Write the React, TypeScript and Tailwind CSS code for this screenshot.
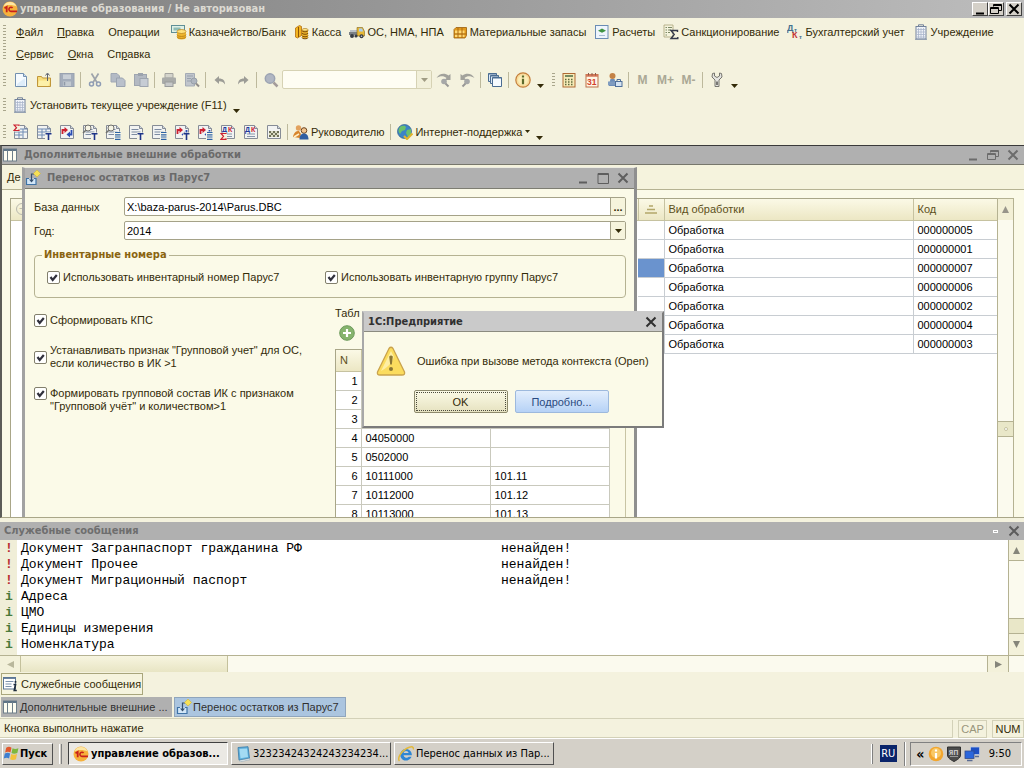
import React from 'react';
import clsx from 'clsx';

type IconProps = { children: React.ReactNode; size?: string };

const Icon = ({ children, size = 'size-4' }: IconProps) => (
  <svg viewBox="0 0 16 16" className={clsx('shrink-0', size)} aria-hidden="true">
    {children}
  </svg>
);

/* ---------- icons ---------- */

const LogoIcon = ({ size = 'size-4' }: { size?: string }) => (
  <Icon size={size}>
    <circle cx="8" cy="8" r="7.5" fill="#f6b13c" />
    <path d="M1.5 5.5a7 7 0 0 1 13 0c-4-2-9-2-13 0z" fill="#fde6a4" />
    <path d="M2.5 7.2l2.2-1.4v5.4" fill="none" stroke="#c8201c" strokeWidth="1.8" />
    <path d="M10.6 6.9A2.1 2.1 0 1 0 9 10.4h6" fill="none" stroke="#c8201c" strokeWidth="1.6" />
  </Icon>
);

const BankIcon = () => (
  <Icon>
    <rect x="0.5" y="1.5" width="13" height="7" fill="#dff0e6" stroke="#5f8f96" />
    <path d="M2.5 5h7" stroke="#8fbcb4" strokeWidth="3" />
    <path d="M6 8h9v5.500a4.500 2 0 0 1-9 0z" fill="#eeb52c" />
    <ellipse cx="10.5" cy="7.500" rx="4.500" ry="2" fill="#ffe27a" stroke="#b57b14" strokeWidth=".7" />
    <path d="M6 10.500a4.500 2 0 0 0 9 0M6 12.500a4.500 2 0 0 0 9 0" fill="none" stroke="#b57b14" strokeWidth=".8" />
  </Icon>
);

const CashIcon = () => (
  <Icon>
    <path d="M1.500 4l4-2.500 2 1v9l-4 2.500-2-1z" fill="#f3b521" stroke="#b26f10" strokeWidth=".8" />
    <path d="M4.500 3v10" stroke="#8d5508" />
    <path d="M8 6h6v7a3 1.500 0 0 1-6 0z" fill="#edb42c" />
    <path d="M8 6.500a3 1.300 0 0 0 6 0M8 9a3 1.300 0 0 0 6 0M8 11.500a3 1.300 0 0 0 6 0M8 13.500a3 1.300 0 0 0 6 0" fill="none" stroke="#7a4c08" />
    <ellipse cx="11" cy="5.800" rx="3" ry="1.300" fill="#ffe98f" stroke="#a06c10" strokeWidth=".6" />
  </Icon>
);

const TruckIcon = () => (
  <Icon>
    <path d="M0 8h9v3H0z" fill="#7a8086" />
    <path d="M1 6h7v2H1z" fill="#b9c0c6" />
    <path d="M8 3.500h5.500l2 4V12H8z" fill="#e6b836" stroke="#7f6420" strokeWidth=".6" />
    <path d="M10 4.500h3l1.200 3H10z" fill="#a9cdee" />
    <circle cx="3" cy="12" r="2" fill="#363b44" />
    <circle cx="7" cy="12" r="1.600" fill="#363b44" />
    <circle cx="12.500" cy="12.300" r="2" fill="#363b44" />
    <circle cx="12.500" cy="12.300" r=".8" fill="#c9ccd2" />
  </Icon>
);

const CrateIcon = () => (
  <Icon>
    <path d="M2 5.500L4 3.500h10.500v8L13 14H2z" fill="#e29a1c" stroke="#9a5e0c" strokeWidth=".8" />
    <path d="M3 6.500h9.500v3H3zM3 10.500h9.500V13H3z" fill="#ffd873" />
    <path d="M6 4v10M10 4v10M2 10h12" stroke="#ab6b12" />
  </Icon>
);

const CalcDocIcon = () => (
  <Icon>
    <rect x="1.500" y="1.500" width="12.500" height="13" fill="#eef5fc" stroke="#6a8db4" />
    <path d="M4 6.800L8 4.500l4 2.300-4 2z" fill="#3f9442" />
    <path d="M5 11.500h6" stroke="#a9bdd4" />
  </Icon>
);

const SanctionIcon = () => (
  <Icon>
    <path d="M1 1h9v12H1z" fill="#f5f4dd" stroke="#a9a37a" strokeWidth=".8" />
    <path d="M2.500 3.500h1.500M5 3.500h4M2.500 6h1.500M5 6h3M2.500 8.500h1.500M5 8.500h2M2.500 11h1.500" stroke="#7d8a66" />
    <path d="M14.500 8V6.500H8l3.200 4L8 14.500h6.800V13" fill="none" stroke="#33384a" strokeWidth="1.400" />
  </Icon>
);

const DtKtIcon = () => (
  <Icon>
    <text x="0" y="7" fontSize="9" fontWeight="bold" fill="#44708e">Д</text>
    <text x="7" y="8" fontSize="6" fontWeight="bold" fill="#44708e">т</text>
    <text x="5" y="14" fontSize="9" fontWeight="bold" fill="#c43434">К</text>
    <text x="12" y="15" fontSize="6" fontWeight="bold" fill="#44708e">т</text>
  </Icon>
);

const BuildingIcon = () => (
  <Icon>
    <path d="M5.500 2.500V.8h5v1.700" fill="none" stroke="#72829b" />
    <rect x="3" y="2.500" width="10" height="12.500" fill="#f0f3f8" stroke="#72829b" />
    <path d="M3.500 5.500h9M3.500 8h9M3.500 10.500h9M3.500 13h9M5.500 4v10.500M8 4v10.500M10.500 4v10.500" stroke="#a9b5cb" strokeWidth=".8" />
    <path d="M2 15.300h12" stroke="#8e9bb0" />
  </Icon>
);

const NewIcon = () => (
  <Icon>
    <path d="M2.500 1.500h8l3 3v10h-11z" fill="#f6fbff" stroke="#7290b0" />
    <path d="M10.500 1.500v3h3" fill="#cfe0f2" stroke="#7290b0" />
    <path d="M4 12l8-6v8H4z" fill="#cfe4f6" opacity=".6" />
  </Icon>
);

const OpenIcon = () => (
  <Icon>
    <path d="M1.500 4.500h4l1 1.500h8v8.500h-13z" fill="#f8de7c" stroke="#c0963a" />
    <path d="M3 8.500h11l-1.500 5.500H2z" fill="#fdf0a8" />
    <path d="M11.500 9V2M9.500 3.500L11.500 1l2 2.500" fill="none" stroke="#5d626e" />
  </Icon>
);

const SaveIcon = () => (
  <Icon>
    <rect x="1" y="1.500" width="14" height="13" fill="#a4adbb" stroke="#99a2b0" />
    <rect x="4" y="2.500" width="8" height="4.500" fill="#c9cfd6" />
    <rect x="4" y="9.500" width="8" height="4.500" fill="#c2c9d0" />
    <path d="M5.500 10v3.500" stroke="#8f99a8" strokeWidth="1.500" />
  </Icon>
);

const CutIcon = () => (
  <Icon>
    <path d="M4.500 1.500l5.500 9M11.500 1.500L6 10.500" stroke="#9ea4ab" strokeWidth="1.700" />
    <circle cx="4.500" cy="12" r="2" fill="none" stroke="#8e9cb4" strokeWidth="1.500" />
    <circle cx="11.500" cy="12" r="2" fill="none" stroke="#8e9cb4" strokeWidth="1.500" />
  </Icon>
);

const CopyIcon = () => (
  <Icon>
    <path d="M1 1.500h6l2.500 2.500v6H1z" fill="#b3bac5" stroke="#a0a8b4" />
    <path d="M6.500 6h6l2.500 2.500v6H6.500z" fill="#b9c0cb" stroke="#9aa3b0" />
  </Icon>
);

const PasteIcon = () => (
  <Icon>
    <rect x="1.500" y="2.500" width="12" height="11" fill="#b3b9c2" stroke="#9ea5af" />
    <rect x="5" y="1" width="5" height="3" fill="#9ca3ad" />
    <rect x="7" y="6.500" width="8" height="8" fill="#c6ccd4" stroke="#9ea5af" />
  </Icon>
);

const PrintIcon = () => (
  <Icon>
    <path d="M4 1.500h8V6H4z" fill="#d4d4cc" stroke="#a5a5a0" />
    <rect x="1" y="5.500" width="14" height="6.500" rx="1" fill="#a9aba9" />
    <rect x="4" y="10" width="8" height="4.500" fill="#c6c8c8" stroke="#9a9c9c" />
  </Icon>
);

const PreviewIcon = () => (
  <Icon>
    <path d="M1.500 1.500h9v12.500h-9z" fill="#c0c5cc" stroke="#a4abb5" />
    <path d="M3 4h6M3 6.500h4M3 9h4" stroke="#98a1ad" />
    <circle cx="10" cy="9" r="3" fill="#aeb5bf" stroke="#979fa9" />
    <path d="M12 11.500l3 3" stroke="#918d8a" strokeWidth="2" />
  </Icon>
);

const UndoIcon = () => (
  <Icon>
    <path d="M2.500 8l4.500-4v2.500c4 0 6 2 6 6-1.500-2.500-3-3.200-6-3.200V12z" fill="#9c9c96" />
  </Icon>
);

const RedoIcon = () => (
  <Icon>
    <path d="M13.500 8L9 4v2.500c-4 0-6 2-6 6 1.500-2.500 3-3.200 6-3.200V12z" fill="#9c9c96" />
  </Icon>
);

const SearchIcon = () => (
  <Icon>
    <circle cx="7" cy="6.500" r="4.700" fill="#b0b6c2" stroke="#9ba3b2" strokeWidth="1.500" />
    <path d="M10.500 10.500l4 4" stroke="#a49c9a" strokeWidth="2.500" />
  </Icon>
);

const FindNextIcon = ({ back }: { back?: boolean }) => (
  <Icon>
    <g transform={back ? 'translate(16 0) scale(-1 1)' : undefined}>
      <path d="M.5 6C3 1 9 .5 12.500 3.500L14.500 2v6H8.500l2-2C7.500 3.500 4 4 .5 6z" fill="#a2a29c" />
      <circle cx="8" cy="9.500" r="2.800" fill="#a6a8a8" />
      <path d="M9.500 11.500l3 3" stroke="#989896" strokeWidth="2" />
    </g>
  </Icon>
);

const WindowsIcon = () => (
  <Icon>
    <path d="M1.500 1.500h8v8h-8z" fill="#dce9f7" stroke="#4a6c92" />
    <path d="M3.500 3.500h8v8h-8z" fill="#dce9f7" stroke="#4a6c92" />
    <path d="M5.500 5.500h9v9h-9z" fill="#f5faff" stroke="#4a6c92" />
    <path d="M1.500 2h8M3.500 4h8M5.500 6h9" stroke="#4a6c92" />
  </Icon>
);

const InfoIcon = () => (
  <Icon>
    <circle cx="8" cy="8" r="7.200" fill="#f8dc9c" stroke="#c47f3c" strokeWidth="1.200" />
    <circle cx="8" cy="8" r="5" fill="#fbeeb8" />
    <path d="M8 3.500v2M8 6.700v5.500" stroke="#5d6a2c" strokeWidth="2.200" />
  </Icon>
);

const CalculatorIcon = () => (
  <Icon>
    <rect x="2" y="1.500" width="12" height="13.500" fill="#f6ecb8" stroke="#b06a34" />
    <path d="M4 4h8" stroke="#4c6a44" strokeWidth="1.500" />
    <path d="M4 7.500h8M4 10h8M4 12.500h8" stroke="#5f6a3c" strokeWidth="1.500" strokeDasharray="1.500 1.500" />
  </Icon>
);

const CalendarIcon = () => (
  <Icon>
    <rect x="2" y="2.500" width="12" height="12.500" fill="#fff6e6" stroke="#bb7048" />
    <path d="M2 3.500h12" stroke="#d6785a" strokeWidth="2.500" />
    <path d="M4.500 1v2.500M8 1v2.500M11.500 1v2.500" stroke="#8d5a48" />
    <text x="3" y="13" fontSize="8.500" fontWeight="bold" fill="#d23f2a">31</text>
  </Icon>
);

const UserLockIcon = () => (
  <Icon>
    <circle cx="5.500" cy="4" r="3" fill="#c38246" />
    <path d="M3.500 7h4l2 7h-8z" fill="#6d8db8" />
    <path d="M1 9.500h9V13H1z" fill="#7f9cc0" />
    <rect x="8.500" y="9.500" width="6.500" height="5" fill="#d5e4f2" stroke="#50709a" />
    <path d="M10 9.500V7.500h3.500v2" fill="none" stroke="#50709a" />
  </Icon>
);

const WrenchIcon = () => (
  <Icon>
    <path d="M3.500 1.500L3 5l3 3v6.500h4V8l3-3-.5-3.500L10.500 1v3L8 5.500 5.500 4V1z" fill="#e4e4e0" stroke="#77776f" />
    <path d="M8 9.500v3.500" stroke="#55554f" strokeWidth="1.500" />
  </Icon>
);

type DocMark = 'sumLeft' | 'table' | 'arrows' | 'findT' | 'findLines' | 'T' | 'lines' | 'arrowsT' | 'arrowsLines' | 'dkSum' | 'dk' | 'chess';

const ReportIcon = ({ mark }: { mark: DocMark }) => {
  const has = (...marks: DocMark[]) => marks.includes(mark);
  return (
    <Icon>
      <path d="M1.500 1.500h10l3 3v10h-13z" fill="#f2f3f2" stroke="#868c96" />
      <path d="M11.500 1.500v3h3" fill="#d2d8e0" stroke="#868c96" />
      {has('T', 'lines', 'findT', 'findLines') && (
        <path d="M3.500 5.500h7M3.500 8h9M3.500 10.500h6" stroke="#7d8ba2" />
      )}
      {has('table', 'sumLeft') && (
        <path d="M1.500 5h13M1.500 8h13M1.500 11h8M6 5v9M10 5v9" stroke="#6f8bb4" />
      )}
      {has('sumLeft') && (
        <>
          <rect x="0" y="0" width="7" height="7.500" fill="#f4f2de" />
          <path d="M6 2V1H1l2.500 2.700L1 6.500h5v-1" fill="none" stroke="#cc2030" strokeWidth="1.200" />
        </>
      )}
      {has('findT', 'findLines') && (
        <>
          <circle cx="6" cy="4" r="3" fill="#f6f4e4" stroke="#70706c" />
          <path d="M3.800 6.200L1 9" stroke="#70706c" strokeWidth="1.500" />
        </>
      )}
      {has('arrows', 'arrowsT', 'arrowsLines') && (
        <>
          <path d="M3.500 10V6H6" fill="none" stroke="#cc2030" strokeWidth="1.800" />
          <path d="M5.500 3L9 6 5.500 9z" fill="#cc2030" />
          <path d="M12.500 6v4.500H11" fill="none" stroke="#2a4cb4" strokeWidth="1.800" />
          <path d="M11 7.500v6l-3.500-3z" fill="#2a4cb4" />
        </>
      )}
      {has('T', 'findT', 'arrowsT', 'table') && (
        <>
          <rect x="9" y="8.500" width="7" height="7.500" fill="#f6f5e8" />
          <path d="M9.500 9.800h6M12.500 9.800V16" stroke="#1e3488" strokeWidth="1.600" />
        </>
      )}
      {has('lines', 'findLines', 'arrowsLines') && (
        <>
          <rect x="9" y="7.500" width="7" height="8.500" fill="#f6f5e8" />
          <path d="M10 8.500h5.500M10 10.800h5.500M10 13h5.500M10 15.300h5.500" stroke="#2c62a4" strokeWidth="1.200" />
        </>
      )}
      {has('dk', 'dkSum') && (
        <>
          <text x="2" y="7.500" fontSize="7" fontWeight="bold" fill="#20399c">Д</text>
          <text x="8" y="7.500" fontSize="7" fontWeight="bold" fill="#cc2030">К</text>
          <path d="M4 10h8M4 12.500h8" stroke="#8796ac" />
        </>
      )}
      {has('dkSum') && (
        <>
          <rect x="0" y="8.500" width="7" height="7.500" fill="#f4f2de" />
          <path d="M6 10V9.500H1l2.500 2.800L1 15.300h5v-1" fill="none" stroke="#cc2030" strokeWidth="1.200" />
        </>
      )}
      {has('chess') && (
        <>
          <path d="M3 7h10v6H3z" fill="#d9dac2" />
          <path d="M3 7h2v2H3zM7 7h2v2H7zM11 7h2v2h-2zM5 9h2v2H5zM9 9h2v2H9zM3 11h2v2H3zM7 11h2v2H7zM11 11h2v2h-2z" fill="#6f7158" />
        </>
      )}
    </Icon>
  );
};

const PeopleIcon = () => (
  <Icon>
    <circle cx="5.500" cy="4" r="2.700" fill="#e2a25e" />
    <path d="M0 13c1-5 3-6 6-6l2 3-1 4z" fill="#d8852c" />
    <circle cx="11" cy="6.500" r="2.800" fill="#f0c48e" stroke="#6c4420" strokeWidth="1" />
    <path d="M6.500 15.500c0-4 2-6 4.500-6s4.500 2 4.500 6z" fill="#2f5fa2" />
    <path d="M1 13l5-3" stroke="#fff0c8" strokeWidth="1.500" />
  </Icon>
);

const GlobeIcon = () => (
  <Icon>
    <circle cx="7.500" cy="7.500" r="7" fill="#3c83c6" stroke="#2c5f8e" strokeWidth=".7" />
    <path d="M3 3c3-2 5-1 6 0l-1 3-3 1-2 3C1 8 1 5 3 3zM10 6l4-1v5l-3 3-2-4z" fill="#6ac06c" />
    <path d="M7 12l3 3 5.500-5.500" fill="none" stroke="#e0b32c" strokeWidth="2.200" />
  </Icon>
);

const GridIcon = () => (
  <Icon>
    <rect x="1.500" y="2" width="13" height="12" fill="#fffef2" stroke="#6e7f8a" />
    <path d="M1.500 3h13" stroke="#5f7486" strokeWidth="2" />
    <path d="M5.500 3v11M10.500 3v11" stroke="#6e7f8a" />
  </Icon>
);

const ProcessIcon = () => (
  <Icon>
    <path d="M4 8.500H1.500v6h9.500v-6H9" fill="#d2e6f7" stroke="#3f73a6" strokeWidth="1.200" />
    <path d="M9 4H6.500v6" fill="none" stroke="#35506e" strokeWidth="1.200" />
    <path d="M4 9.500h5l-2.500 3z" fill="#35506e" />
    <path d="M12 0l3.500 3.500L12 7 8.500 3.500z" fill="#f6e056" stroke="#cdb53a" strokeWidth=".6" />
  </Icon>
);

const MessagesIcon = () => (
  <Icon>
    <rect x=".5" y="1.500" width="12" height="11.500" fill="#fff" stroke="#5d7796" />
    <path d="M.5 2h12" stroke="#5d7796" strokeWidth="1.800" />
    <path d="M2.500 5.500h8M2.500 8h6M2.500 10.500h6" stroke="#7d93ad" />
    <path d="M12.500 5v1.800M10.500 8.500h2l-1.200 6h2.500" fill="none" stroke="#1f2c3c" strokeWidth="1.700" />
  </Icon>
);

const WarningIcon = () => (
  <svg viewBox="0 0 30 30" className="size-[30px] shrink-0" aria-hidden="true">
    <path d="M13 2.500q2-2.500 4 0L28.500 26q.8 3-2.500 3H4q-3.300 0-2.500-3z" fill="#fbdc5e" stroke="#c9a24c" strokeWidth="1.300" />
    <path d="M5 25L15 5l3 6c-3 7-7 11-13 14z" fill="#fff3b4" opacity=".8" />
    <path d="M13.200 10.500q1.800-2 3.600 0l-1 8h-1.600z" fill="#8b7634" />
    <circle cx="15" cy="23" r="2" fill="#8b7634" />
  </svg>
);

const WindowsFlagIcon = () => (
  <Icon size="size-[17px]">
    <path d="M3 2.500c2-1.200 3.500-1 5 0L7 7C5.500 6 4 6 2 7z" fill="#e2582c" />
    <path d="M9 3c1.500 1 3.500 1 5.500 0l-1 4.500c-2 1-4 1-5.500 0z" fill="#7db83c" />
    <path d="M1.700 8c2-1 3.700-1 5 0l-1 4.800c-1.500-1-3-1-5 0z" fill="#3f7fd0" />
    <path d="M7.700 8.500c1.500 1 3.500 1 5.500 0l-1 4.800c-2 1-4 1-5.500 0z" fill="#f3c23a" />
  </Icon>
);

const NotebookIcon = () => (
  <Icon>
    <path d="M3 1.500l10-.8 1.500 11.500-10.500 2z" fill="#5fb0dc" stroke="#3578a8" strokeWidth=".8" />
    <path d="M4.500 3l7.500-.6 1 8.500-7.500 1.300z" fill="#a4dbf3" />
    <path d="M4 14.500l10.500-2 .5 1.200-9.500 2z" fill="#f2f6f8" stroke="#7d98a8" strokeWidth=".5" />
  </Icon>
);

const ExplorerIcon = () => (
  <Icon>
    <path d="M13.800 9.300H5.500a3 3 0 0 0 5.300 1.400h2.700A5.800 5.800 0 1 1 13.800 9.300zM5.500 7h5.200a2.700 2.700 0 0 0-5.200 0z" fill="#2e86d4" fillRule="evenodd" />
    <path d="M1.500 15C-1 12.500 3 5.500 8.500 2.500 12.500.3 16 0 15.300 3.500" fill="none" stroke="#e3b93c" strokeWidth="1.500" />
  </Icon>
);

const TrayInfoIcon = () => (
  <Icon>
    <circle cx="8" cy="8" r="7.300" fill="#f2a62e" />
    <circle cx="8" cy="7" r="5" fill="#f9c866" />
    <path d="M8 3.500v2M8 7v5.500" stroke="#fff" strokeWidth="2.200" />
  </Icon>
);

const ShieldIcon = () => (
  <Icon>
    <path d="M1.500 1h13v8c0 3-3.500 5-6.500 6.500C5 14 1.500 12 1.500 9z" fill="#4c4c4c" stroke="#2e2e2e" />
    <text x="2.500" y="8.500" fontSize="7" fontWeight="bold" fill="#c6c6c6">ЯП</text>
    <path d="M4 10.500h8" stroke="#9a9a9a" />
  </Icon>
);

const NetworkIcon = () => (
  <Icon>
    <rect x="6.500" y="1" width="9" height="7.500" fill="#1c4fc4" stroke="#b9c9e6" strokeWidth=".8" />
    <rect x="1" y="5" width="9" height="7.500" fill="#2a66dc" stroke="#324c8c" strokeWidth=".8" />
    <path d="M3 14.500h5.500M11 10.500h4" stroke="#5a6c94" strokeWidth="1.500" />
  </Icon>
);

const Triangle = ({ dir, className }: { dir: 'up' | 'down' | 'left' | 'right'; className: string }) => {
  const points = { up: '0,8 4,0 8,8', down: '0,0 8,0 4,8', left: '8,0 8,8 0,4', right: '0,0 8,4 0,8' }[dir];
  return (
    <svg viewBox="0 0 8 8" preserveAspectRatio="none" className={clsx('shrink-0', className)} aria-hidden="true">
      <polygon points={points} fill="currentColor" />
    </svg>
  );
};

/* ---------- small pieces ---------- */

const Grip = ({ className }: { className: string }) => (
  <span className={clsx('w-[3px] shrink-0 bg-[repeating-linear-gradient(#a9a68c_0_1px,transparent_1px_3px)]', className)} />
);

const Sep = () => (
  <span className="flex w-[5px] shrink-0 justify-center">
    <span className="h-4 w-px bg-[#bdb99c]" />
  </span>
);

const ToolButton = ({ label, children }: { label: string; children: React.ReactNode }) => (
  <button type="button" aria-label={label} className="flex h-5 w-[23px] shrink-0 items-center justify-center">
    {children}
  </button>
);

const MoreButton = () => (
  <button type="button" aria-label="Ещё" className="flex h-5 w-3 shrink-0 items-end justify-center pb-[2px]">
    <Triangle dir="down" className="h-1 w-[7px]" />
  </button>
);

type WinButtonKind = 'min' | 'max' | 'restore' | 'close';

const WinGlyph = ({ kind }: { kind: WinButtonKind }) => (
  <svg viewBox="0 0 12 12" className="size-3" fill="none" stroke="currentColor" aria-hidden="true">
    {kind === 'min' && <path d="M2 10.500h8" strokeWidth="2" />}
    {kind === 'max' && <path d="M1 1.500h10.500v10H1zM1 2.500h10" />}
    {kind === 'restore' && <path d="M3.500 3.500v-2h8v6h-3M.5 4.500h8v6h-8zM.5 5.500h8M3.500 2.500h8" />}
    {kind === 'close' && <path d="M1.500 1.500l9 9M10.500 1.500l-9 9" strokeWidth="2" />}
  </svg>
);

const winLabels: Record<WinButtonKind, string> = {
  min: 'Свернуть',
  max: 'Развернуть',
  restore: 'Восстановить',
  close: 'Закрыть',
};

const WinButtons = ({ kinds }: { kinds: WinButtonKind[] }) => (
  <div className="flex items-center gap-2">
    {kinds.map((kind) => (
      <button key={kind} type="button" aria-label={winLabels[kind]} className="flex size-3 items-center justify-center">
        <WinGlyph kind={kind} />
      </button>
    ))}
  </div>
);

const Check = ({ children, top }: { children: React.ReactNode; top?: boolean }) => (
  <label className={clsx('flex gap-[3px] leading-[13px]', top ? 'items-start' : 'items-center')}>
    <span className="relative size-[13px] shrink-0">
      <input
        type="checkbox"
        defaultChecked
        className="peer block size-[13px] appearance-none rounded-xs border border-[#827f6c] bg-white"
      />
      <svg viewBox="0 0 13 13" className="pointer-events-none absolute inset-0 hidden peer-checked:block" aria-hidden="true">
        <path d="M3.500 6l2.200 3L9.800 4" fill="none" stroke="#30303c" strokeWidth="2.200" />
      </svg>
    </span>
    <span>{children}</span>
  </label>
);

/* ---------- main menu and toolbars ---------- */

const menuItems: { label: React.ReactNode; icon?: React.ReactNode }[] = [
  { label: <><u>Ф</u>айл</> },
  { label: <><u>П</u>равка</> },
  { label: 'Операции' },
  { label: 'Казначейство/Банк', icon: <BankIcon /> },
  { label: 'Касса', icon: <CashIcon /> },
  { label: 'ОС, НМА, НПА', icon: <TruckIcon /> },
  { label: 'Материальные запасы', icon: <CrateIcon /> },
  { label: 'Расчеты', icon: <CalcDocIcon /> },
  { label: 'Санкционирование', icon: <SanctionIcon /> },
  { label: 'Бухгалтерский учет', icon: <DtKtIcon /> },
  { label: 'Учреждение', icon: <BuildingIcon /> },
];

const reports: { mark: DocMark; label: string }[] = [
  { mark: 'sumLeft', label: 'Оборотно-сальдовая ведомость' },
  { mark: 'table', label: 'Сводная таблица' },
  { mark: 'arrows', label: 'Обороты' },
  { mark: 'findT', label: 'Анализ счета' },
  { mark: 'findLines', label: 'Анализ субконто' },
  { mark: 'T', label: 'Карточка счета' },
  { mark: 'lines', label: 'Карточка субконто' },
  { mark: 'arrowsT', label: 'Обороты счета' },
  { mark: 'arrowsLines', label: 'Обороты субконто' },
  { mark: 'dkSum', label: 'Сводные проводки' },
  { mark: 'dk', label: 'Проводки' },
  { mark: 'chess', label: 'Шахматная ведомость' },
];

const AppTitle = () => (
  <header className="flex h-[18px] shrink-0 items-center bg-linear-to-r from-[#808080] to-[#bdbdbd] pr-[2px] pl-[2px]">
    <LogoIcon />
    <h1 className="ml-[2px] flex-1 font-['DejaVu_Sans_Condensed','DejaVu_Sans',sans-serif] text-[11px] font-bold text-[#dcdad2]">
      управление образования / Не авторизован
    </h1>
    <div className="flex text-black">
      {(['min', 'restore', 'close'] as const).map((kind) => (
        <button
          key={kind}
          type="button"
          aria-label={winLabels[kind]}
          className="flex h-[14px] w-4 items-center justify-center border border-t-white border-r-[#404040] border-b-[#404040] border-l-white bg-[#d4d0c8] p-px last:ml-[2px]"
        >
          <WinGlyph kind={kind} />
        </button>
      ))}
    </div>
  </header>
);

const MainMenu = () => (
  <nav className="flex h-[49px] shrink-0 items-center pt-px pl-[3px]">
    <Grip className="h-9" />
    <div className="ml-[7px] flex flex-col">
      <div className="flex h-[22px] items-center gap-2">
        {menuItems.map((item, i) => (
          <button key={i} type="button" className={clsx('flex items-center gap-[2px]', !item.icon && 'px-[3px]')}>
            {item.icon}
            <span>{item.label}</span>
          </button>
        ))}
      </div>
      <div className="flex h-[22px] items-center gap-2">
        <button type="button" className="px-[3px]"><u>С</u>ервис</button>
        <button type="button" className="px-[3px]"><u>О</u>кна</button>
        <button type="button" className="px-[3px]">Сп<u>р</u>авка</button>
      </div>
    </div>
  </nav>
);

const MainToolbar = () => (
  <div className="flex h-[25px] shrink-0 items-center pl-[3px]">
    <Grip className="mr-[3px] h-[14px]" />
    <ToolButton label="Новый"><NewIcon /></ToolButton>
    <ToolButton label="Открыть"><OpenIcon /></ToolButton>
    <ToolButton label="Сохранить"><SaveIcon /></ToolButton>
    <Sep />
    <ToolButton label="Вырезать"><CutIcon /></ToolButton>
    <ToolButton label="Копировать"><CopyIcon /></ToolButton>
    <ToolButton label="Вставить"><PasteIcon /></ToolButton>
    <Sep />
    <ToolButton label="Печать"><PrintIcon /></ToolButton>
    <ToolButton label="Просмотр"><PreviewIcon /></ToolButton>
    <Sep />
    <ToolButton label="Отменить"><UndoIcon /></ToolButton>
    <ToolButton label="Вернуть"><RedoIcon /></ToolButton>
    <Sep />
    <ToolButton label="Найти"><SearchIcon /></ToolButton>
    <span className="flex h-[19px] w-[150px] shrink-0 items-center rounded-xs border border-[#d6d2b4] bg-[#fefdf3]">
      <select aria-label="Строка поиска" className="h-full min-w-0 flex-1 appearance-none">
        <option value=""></option>
      </select>
      <span className="flex h-full w-[15px] items-center justify-center border-l border-[#d6d2b4] bg-[#f2f0da] text-[#a09c84]">
        <Triangle dir="down" className="h-1 w-[7px]" />
      </span>
    </span>
    <ToolButton label="Найти следующий"><FindNextIcon /></ToolButton>
    <ToolButton label="Найти предыдущий"><FindNextIcon back /></ToolButton>
    <Sep />
    <ToolButton label="Окна"><WindowsIcon /></ToolButton>
    <Sep />
    <ToolButton label="Справка"><InfoIcon /></ToolButton>
    <MoreButton />
    <Grip className="mr-[2px] ml-[6px] h-[14px]" />
    <ToolButton label="Калькулятор"><CalculatorIcon /></ToolButton>
    <ToolButton label="Календарь"><CalendarIcon /></ToolButton>
    <ToolButton label="Пользователи"><UserLockIcon /></ToolButton>
    <Sep />
    {['M', 'M+', 'M-'].map((label) => (
      <button key={label} type="button" className="w-[23px] shrink-0 text-center text-[12px] font-bold text-[#aaa895]">
        {label}
      </button>
    ))}
    <Sep />
    <ToolButton label="Сервис"><WrenchIcon /></ToolButton>
    <MoreButton />
  </div>
);

const Toolbars = () => (
  <>
    <MainToolbar />
    <div className="flex h-[26px] shrink-0 items-center pl-[3px]">
      <Grip className="mr-[6px] h-[14px]" />
      <button type="button" className="flex items-center gap-[2px]">
        <BuildingIcon />
        <span>Установить текущее учреждение (F11)</span>
      </button>
      <span className="w-1" />
      <MoreButton />
    </div>
    <div className="flex h-[27px] shrink-0 items-center pl-[3px]">
      <Grip className="mr-[3px] h-[14px]" />
      {reports.map(({ mark, label }) => (
        <ToolButton key={mark} label={label}><ReportIcon mark={mark} /></ToolButton>
      ))}
      <Sep />
      <button type="button" className="mr-1 ml-[3px] flex items-center gap-[2px]">
        <PeopleIcon />
        <span>Руководителю</span>
      </button>
      <Sep />
      <button type="button" className="ml-1 flex items-center gap-[2px]">
        <GlobeIcon />
        <span>Интернет-поддержка</span>
        <Triangle dir="down" className="h-[3px] w-[5px]" />
      </button>
      <span className="w-1" />
      <MoreButton />
    </div>
  </>
);

/* ---------- workspace ---------- */

const codes = ['000000005', '000000001', '000000007', '000000006', '000000002', '000000004', '000000003'];

const ProcessingsWindow = () => (
  <section className="flex h-full flex-col border-t border-b border-l-2 border-t-[#3a3a3a] border-b-[#a9a688] border-l-[#5c5c58] bg-[#fbfae8]">
    <div className="flex h-[18px] shrink-0 items-center bg-[#b0b0b0] pr-[5px] text-[#6c6c6c]">
      <GridIcon />
      <h2 className="ml-[6px] flex-1 font-['DejaVu_Sans_Condensed','DejaVu_Sans',sans-serif] text-[11px] font-bold text-[#6a6a6a]">Дополнительные внешние обработки</h2>
      <WinButtons kinds={['min', 'restore', 'close']} />
    </div>
    <div className="flex h-[26px] shrink-0 items-center border-t border-b border-t-[#77776c] border-b-[#b5b292] bg-[#f5f3dd] pl-[5px]">
      <button type="button">Де</button>
    </div>
    <div className="flex min-h-0 flex-1 pt-2 pr-[10px] pl-2">
      <div className="min-w-0 flex-1 overflow-hidden border-t border-l border-[#a9a688] bg-white">
        <table className="w-full table-fixed border-collapse text-black">
          <colgroup>
            <col />
            <col className="w-[26px]" />
            <col className="w-[249px]" />
            <col className="w-[84px]" />
          </colgroup>
          <thead>
            <tr className="h-[21px] bg-linear-to-b from-[#fbf9e6] to-[#ece7c4] text-left text-[#5c5020]">
              <th className="border-r border-b border-[#c6c2a0] pl-[5px]">
                <span className="block size-3 rounded-full border border-[#b9b9ae] text-center text-[9px] leading-[9px] font-normal text-[#a3a398]">–</span>
              </th>
              <th className="border-r border-b border-[#c6c2a0]">
                <svg viewBox="0 0 12 9" className="mx-auto h-[9px] w-3" aria-hidden="true">
                  <path d="M4 1h4M2 4.500h8M0 8h12" stroke="#b3a76a" strokeWidth="1.600" />
                </svg>
              </th>
              <th className="border-r border-b border-[#c6c2a0] pl-1 font-normal">Вид обработки</th>
              <th className="border-b border-[#c6c2a0] pl-1 font-normal">Код</th>
            </tr>
          </thead>
          <tbody>
            {codes.map((code) => (
              <tr key={code} className="h-[19px]">
                <td />
                <td className={clsx('border-r border-b border-[#c8cdd2]', code === '000000007' && 'bg-[#6a93ce]')} />
                <td className="border-r border-b border-[#c8cdd2] pl-1">Обработка</td>
                <td className="border-b border-[#c8cdd2] pl-1">{code}</td>
              </tr>
            ))}
          </tbody>
        </table>
      </div>
      <div className="flex w-[17px] shrink-0 flex-col border-x border-t border-[#b5b292] bg-[#fbfaee]">
        <span className="flex h-[21px] items-center justify-center bg-[#f3f0d6] text-[#98958a]">
          <Triangle dir="up" className="h-[7px] w-[7px]" />
        </span>
        <span className="flex-1" />
        <span className="mb-20 flex h-4 items-center justify-center border-y border-[#b5b292] bg-[#e9e7c8]">
          <span className="size-1 rounded-full border border-[#c6c3a0] bg-white" />
        </span>
      </div>
    </div>
  </section>
);

const kpsRows = [
  ['', ''],
  ['', ''],
  ['', ''],
  ['04050000', ''],
  ['0502000', ''],
  ['10111000', '101.11'],
  ['10112000', '101.12'],
  ['10113000', '101.13'],
];

const TransferWindow = () => (
  <section className="absolute top-[22px] bottom-px left-[22px] flex w-[615px] flex-col overflow-hidden border-t border-r-[3px] border-l-[3px] border-t-[#ecebe0] border-r-[#8f8f8f] border-l-[#a2a2a2] bg-[#fbfae8]">
    <div className="flex h-[21px] shrink-0 items-center border-b border-[#7d7d72] bg-[#b0b0b0] pr-[5px] text-[#5e5e5e]">
      <ProcessIcon />
      <h2 className="ml-[6px] flex-1 font-['DejaVu_Sans_Condensed','DejaVu_Sans',sans-serif] text-[11px] font-bold text-[#6a6a6a]">Перенос остатков из Парус7</h2>
      <WinButtons kinds={['min', 'max', 'close']} />
    </div>
    <form className="flex min-h-0 flex-1 flex-col pt-2 pr-2 pl-[9px]">
      <div className="flex h-[19px] shrink-0 items-center">
        <label htmlFor="base" className="w-[90px]">База данных</label>
        <span className="flex h-full flex-1 overflow-hidden rounded-xs border border-[#a5a288] bg-white">
          <input id="base" defaultValue="X:\baza-parus-2014\Parus.DBC" className="min-w-0 flex-1 px-[2px] text-black outline-none" />
          <button type="button" aria-label="Выбрать" className="w-[15px] border-l border-[#a5a288] bg-[#f6f4dc] text-center font-bold">...</button>
        </span>
      </div>
      <div className="mt-[5px] flex h-[19px] shrink-0 items-center">
        <label htmlFor="year" className="w-[90px]">Год:</label>
        <span className="flex h-full flex-1 overflow-hidden rounded-xs border border-[#a5a288] bg-white">
          <select id="year" defaultValue="2014" className="min-w-0 flex-1 appearance-none px-[2px] text-black outline-none">
            <option>2014</option>
          </select>
          <span className="flex w-[15px] items-center justify-center border-l border-[#a5a288] bg-[#f6f4dc]">
            <Triangle dir="down" className="h-1 w-[7px]" />
          </span>
        </span>
      </div>
      <fieldset className="mt-2 flex shrink-0 rounded-sm border border-[#b5b292] px-3 pt-[9px] pb-[13px]">
        <legend className="-ml-[5px] px-[2px] font-['DejaVu_Sans_Condensed','DejaVu_Sans',sans-serif] text-[11px] leading-[14px] font-bold text-[#8a6410]">
          Инвентарные номера
        </legend>
        <div className="w-[278px]"><Check>Использовать инвентарный номер Парус7</Check></div>
        <Check>Использовать инвентарную группу Парус7</Check>
      </fieldset>
      <div className="flex min-h-0 flex-1">
        <div className="flex w-[301px] shrink-0 flex-col gap-[17px] pt-4">
          <Check>Сформировать КПС</Check>
          <Check>Устанавливать признак "Групповой учет" для ОС,<br />если количество в ИК &gt;1</Check>
          <Check top>Формировать групповой состав ИК с признаком<br />"Групповой учёт" и количеством&gt;1</Check>
        </div>
        <div className="flex min-h-0 flex-1 flex-col pt-2">
          <span className="leading-[14px]">Табл</span>
          <button type="button" aria-label="Добавить" className="mt-[5px] mb-2 ml-1 size-4 shrink-0">
            <Icon>
              <circle cx="8" cy="8" r="7.300" fill="#86b46e" stroke="#6d9a5c" />
              <path d="M8 4v8M4 8h8" stroke="#fff" strokeWidth="2.200" />
            </Icon>
          </button>
          <div className="min-h-0 flex-1 border-r border-[#c8c4a4]">
            <div className="w-[275px] border-t border-l border-[#a9a688] bg-white">
              <table className="w-full table-fixed border-collapse text-black">
                <colgroup>
                  <col className="w-[25px]" />
                  <col className="w-[129px]" />
                  <col />
                </colgroup>
                <thead>
                  <tr className="h-[21px] bg-linear-to-b from-[#fbf9e6] to-[#ece7c4] text-left text-[#5c5020]">
                    <th className="border-r border-b border-[#c6c2a0] pl-1 font-normal">N</th>
                    <th className="border-r border-b border-[#c6c2a0]" />
                    <th className="border-r border-b border-[#c6c2a0]" />
                  </tr>
                </thead>
                <tbody>
                  {kpsRows.map(([kps, account], i) => (
                    <tr key={i} className="h-[19px]">
                      <td className="border-r border-b border-[#c9c9bd] pr-[3px] text-right">{i + 1}</td>
                      <td className="border-r border-b border-[#c9c9bd] pl-1">{kps}</td>
                      <td className="border-r border-b border-[#c9c9bd] pl-1">{account}</td>
                    </tr>
                  ))}
                </tbody>
              </table>
            </div>
          </div>
        </div>
      </div>
    </form>
  </section>
);

const ErrorDialog = () => (
  <div
    role="alertdialog"
    aria-labelledby="dialog-title"
    className="absolute top-[166px] left-[362px] w-[302px] border-2 border-t-[#cacaca] border-r-[#7b7b7b] border-b-[#7b7b7b] border-l-[#a8a8a8] bg-[#fbfae8]"
  >
    <div className="flex h-[19px] items-center border-b border-[#8b8b80] bg-[#cacaca] pr-[5px] pl-1 text-[#303030]">
      <h2 id="dialog-title" className="flex-1 font-['DejaVu_Sans_Condensed','DejaVu_Sans',sans-serif] text-[11px] font-bold">1С:Предприятие</h2>
      <WinButtons kinds={['close']} />
    </div>
    <div className="flex items-center gap-[11px] pt-[14px] pl-3">
      <WarningIcon />
      <p>Ошибка при вызове метода контекста (Open)</p>
    </div>
    <div className="flex justify-center gap-[7px] pt-[14px] pr-1 pb-[13px]">
      <button type="button" className="h-[23px] w-[94px] rounded-xs border border-[#8d8a6c] bg-linear-to-b from-[#fbfae6] to-[#e6e2c0] p-px">
        <span className="flex h-full items-center justify-center border border-dotted border-[#4a4a3c]">OK</span>
      </button>
      <button type="button" className="h-[23px] w-[94px] rounded-xs border border-[#9db9dd] bg-linear-to-b from-[#e3eefc] to-[#b6d2f6] text-[#2a4a80]">
        Подробно...
      </button>
    </div>
  </div>
);

/* ---------- service messages ---------- */

const messages = [
  { error: true, text: 'Документ Загранпаспорт гражданина РФ' },
  { error: true, text: 'Документ Прочее' },
  { error: true, text: 'Документ Миграционный паспорт' },
  { error: false, text: 'Адреса' },
  { error: false, text: 'ЦМО' },
  { error: false, text: 'Единицы измерения' },
  { error: false, text: 'Номенклатура' },
];

const MessagesPanel = () => (
  <section className="shrink-0">
    <div className="mt-1 flex h-[18px] items-center bg-[#b0b0b0] pr-1 pl-1 text-[#5c5c5c]">
      <h2 className="flex-1 font-['DejaVu_Sans_Condensed','DejaVu_Sans',sans-serif] text-[11px] font-bold text-[#6e6e6e]">Служебные сообщения</h2>
      <span className="mr-[10px] h-[3px] w-[5px] border border-white" />
      <WinButtons kinds={['close']} />
    </div>
    <div className="flex bg-white">
      <ul className="h-[115px] flex-1 bg-linear-to-r from-[#f0eed8] from-[17px] to-white to-[17px] pt-px font-['Liberation_Mono',monospace] text-[13px] leading-4 text-black">
        {messages.map(({ error, text }) => (
          <li key={text} className="flex">
            <span className={clsx('w-[21px] pl-[5px] font-bold', error ? 'text-[#b83232]' : 'text-[#4a7a3c]')}>
              {error ? '!' : 'i'}
            </span>
            <span className="w-[480px]">{text}</span>
            {error && <span>ненайден!</span>}
          </li>
        ))}
      </ul>
      <div className="flex w-4 flex-col border-l border-[#b5b292] bg-[#fbfaee] text-[#85857a]">
        <span className="flex h-[21px] items-center justify-center border-b border-[#b5b292] bg-[#f3f1da]">
          <Triangle dir="up" className="h-[7px] w-[7px]" />
        </span>
        <span className="flex-1" />
        <span className="h-4 border-y border-[#b5b292] bg-[#e9e7c8]" />
        <span className="flex h-[21px] items-center justify-center bg-[#f3f1da]">
          <Triangle dir="down" className="h-[7px] w-[7px]" />
        </span>
      </div>
    </div>
    <div className="flex h-[17px] border-t border-[#b5b292] bg-[#fbfaee] text-[#85857a]">
      <span className="flex w-5 items-center justify-center bg-[#f3f1da] text-[#b9b79c]">
        <Triangle dir="left" className="size-[7px]" />
      </span>
      <span className="w-[208px] border-x border-[#c4c19c] bg-linear-to-b from-[#f7f5e0] to-[#e8e5c4]" />
      <span className="flex-1" />
      <span className="flex w-[22px] items-center justify-center border-x border-[#b5b292] bg-[#f3f1da]">
        <Triangle dir="right" className="size-[7px]" />
      </span>
      <span className="w-[15px]" />
    </div>
  </section>
);

const BottomBars = () => (
  <>
    <div className="flex h-6 shrink-0 items-center pl-px">
      <button type="button" className="flex h-[22px] items-center gap-[2px] border border-[#a9a67c] bg-[#f6f4de] px-px">
        <MessagesIcon />
        <span>Служебные сообщения</span>
      </button>
    </div>
    <div className="flex h-[22px] shrink-0 items-center gap-[2px] pl-px">
      <button type="button" className="flex h-5 w-[171px] items-center gap-[2px] bg-[#b0b0b0] px-px text-[#303030]">
        <GridIcon />
        <span>Дополнительные внешние ...</span>
      </button>
      <button type="button" className="flex h-5 w-[172px] items-center gap-px border border-[#8fa5bc] bg-[#abc5df] px-px text-[#303030]">
        <ProcessIcon />
        <span>Перенос остатков из Парус7</span>
      </button>
    </div>
    <div className="flex h-5 shrink-0 items-center gap-[5px] border-t border-[#d3d1b8]">
      <span className="flex h-[18px] flex-1 items-center border-r border-b border-[#d3d1b8] pl-1">Кнопка выполнить нажатие</span>
      <span className="flex h-[18px] w-[29px] items-center justify-center border border-[#d3d1b8] text-[#98957c]">CAP</span>
      <span className="flex h-[18px] w-8 items-center justify-center border border-[#d3d1b8]">NUM</span>
    </div>
  </>
);

/* ---------- Windows taskbar ---------- */

const raised = 'border border-t-white border-r-[#505050] border-b-[#505050] border-l-white bg-[#d4d0c8]';

const Taskbar = () => (
  <footer className="flex h-[30px] shrink-0 items-center border-t border-white bg-[#d4d0c8] px-[2px] font-['DejaVu_Sans_Condensed','DejaVu_Sans',sans-serif] text-black">
    <button type="button" className={clsx('flex h-[22px] w-[51px] items-center font-bold', raised)}>
      <WindowsFlagIcon />
      Пуск
    </button>
    <span className="mx-[6px] h-5 w-[3px] border-x border-l-white border-r-[#808080]" />
    <div className="flex flex-1 gap-[3px]">
      <button type="button" className="flex h-[23px] w-40 items-center gap-[2px] border border-t-[#404040] border-r-white border-b-white border-l-[#404040] bg-[#ebe9e4] px-1 font-bold whitespace-nowrap">
        <LogoIcon />
        управление образов...
      </button>
      <button type="button" className={clsx('flex h-[23px] w-40 items-center gap-[2px] px-[3px] whitespace-nowrap', raised)}>
        <NotebookIcon />
        32323424324243234234...
      </button>
      <button type="button" className={clsx('flex h-[23px] w-40 items-center gap-[2px] px-[3px] whitespace-nowrap', raised)}>
        <ExplorerIcon />
        Перенос данных из Пар...
      </button>
    </div>
    <span className="h-5 w-[2px] border-r border-[#808080] bg-white" />
    <span className="mx-[7px] flex size-[17px] items-center justify-center bg-[#0a246a] text-white">RU</span>
    <span className="mr-1 h-6 w-[2px] border-r border-white bg-[#808080]" />
    <div className="flex h-6 items-center gap-[2px] border border-t-[#808080] border-r-white border-b-white border-l-[#808080] pr-[10px] pl-1">
      <button type="button" aria-label="Показать скрытые значки" className="w-[11px] text-[14px] leading-4 font-bold">«</button>
      <TrayInfoIcon />
      <ShieldIcon />
      <NetworkIcon />
      <time className="ml-[7px]">9:50</time>
    </div>
  </footer>
);

const App = () => (
  <div className="flex h-screen flex-col overflow-hidden bg-[#f4f2de] font-['Liberation_Sans',Arial,sans-serif] text-[11px] leading-[14px] whitespace-nowrap text-[#332b08]">
    <AppTitle />
    <MainMenu />
    <Toolbars />
    <main className="relative min-h-0 flex-1">
      <ProcessingsWindow />
      <TransferWindow />
      <ErrorDialog />
    </main>
    <MessagesPanel />
    <BottomBars />
    <Taskbar />
  </div>
);

export default App;
